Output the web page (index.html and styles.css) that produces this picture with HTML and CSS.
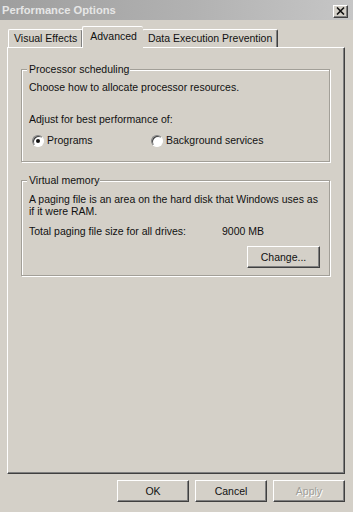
FILE: index.html
```html
<!DOCTYPE html>
<html>
<head>
<meta charset="utf-8">
<link rel="stylesheet" href="styles.css">
</head>
<body>
<div class="window">
  <div class="titlebar">
    <span class="title">Performance Options</span>
    <span class="close">
      <svg width="9" height="8" viewBox="0 0 9 8"><path d="M1 0.5 L8 7.5 M8 0.5 L1 7.5" stroke="#111" stroke-width="1.6"/></svg>
    </span>
  </div>
  <div class="content">
    <div class="tabs">
      <div class="tab">Visual Effects</div>
      <div class="tab active">Advanced</div>
      <div class="tab">Data Execution Prevention</div>
    </div>
    <div class="panel">
      <div class="group proc">
        <span class="legend">Processor scheduling</span>
        <p class="line">Choose how to allocate processor resources.</p>
        <p class="line adjust">Adjust for best performance of:</p>
        <div class="radios">
          <label class="radio-item programs"><span class="radio checked"></span>Programs</label>
          <label class="radio-item"><span class="radio"></span>Background services</label>
        </div>
      </div>
      <div class="group vm">
        <span class="legend">Virtual memory</span>
        <p class="wrap">A paging file is an area on the hard disk that Windows uses as if it were RAM.</p>
        <div class="total"><span class="total-label">Total paging file size for all drives:</span><span>9000 MB</span></div>
        <div class="change-row"><span class="btn">Change...</span></div>
      </div>
    </div>
    <div class="footer">
      <span class="btn">OK</span>
      <span class="btn">Cancel</span>
      <span class="btn disabled">Apply</span>
    </div>
  </div>
</div>
</body>
</html>
```
FILE: styles.css
```css
* { box-sizing: border-box; }
html, body {
  margin: 0;
  padding: 0;
  width: 353px;
  height: 512px;
  background: #d4d0c8;
  overflow: hidden;
}
body {
  font-family: "Liberation Sans", Arial, sans-serif;
  font-size: 10.5px;
  color: #111;
}
.window {
  width: 353px;
  height: 512px;
  display: flex;
  flex-direction: column;
}
.titlebar {
  height: 20px;
  background: linear-gradient(to right, #9e9e9e, #b2b2b2 55%, #c6c6c6);
  display: flex;
  align-items: center;
  justify-content: space-between;
  padding: 0 5px 0 2px;
}
.title {
  color: #e6e6e6;
  font-weight: bold;
  font-size: 11.2px;
}
.close {
  width: 15px;
  height: 13px;
  background: #d4d0c8;
  border: 1px solid;
  border-color: #fff #404040 #404040 #fff;
  box-shadow: inset -1px -1px 0 #808080;
  display: flex;
  align-items: center;
  justify-content: center;
  margin-top: 2px;
}
.content {
  padding: 6px 8px 0 7px;
  display: flex;
  flex-direction: column;
}
.tabs {
  display: flex;
  align-items: flex-end;
  height: 21px;
  position: relative;
  z-index: 1;
  padding-left: 1px;
}
.tab {
  height: 18px;
  line-height: 17px;
  padding: 0 5px;
  border-top: 1px solid #fff;
  border-left: 1px solid #fff;
  border-right: 1px solid #404040;
  box-shadow: inset -1px 0 0 #808080;
  border-radius: 2px 2px 0 0;
  background: #d4d0c8;
}
.tab.active {
  height: 22px;
  line-height: 19px;
  margin: 0 -1px 0 -1px;
  padding: 0 6px 0 7px;
  margin-bottom: -1px;
  border-left: 1px solid #fff;
  z-index: 2;
  border-right: none;
  box-shadow: none;
}
.panel {
  height: 427px;
  border: 1px solid;
  border-color: #fff #404040 #404040 #fff;
  box-shadow: inset -1px -1px 0 #808080;
  padding: 21px 14px 0 13px;
  display: flex;
  flex-direction: column;
  gap: 18px;
}
.group {
  position: relative;
  border: 1px solid #a29f98;
  box-shadow: 1px 1px 0 #fff, inset 1px 1px 0 #fff;
  padding: 11px 8px 0 7px;
}
.legend {
  position: absolute;
  top: -7px;
  left: 5px;
  padding: 0 1px 0 2px;
  background: #d4d0c8;
  line-height: 13px;
}
.line {
  margin: 0;
  line-height: 13px;
}
.proc { height: 93px; }
.adjust { margin-top: 19px; }
.radios {
  display: flex;
  margin-top: 8px;
  padding-left: 3px;
  line-height: 13px;
}
.radio-item {
  display: flex;
  align-items: center;
  gap: 2px;
}
.radio-item.programs { width: 119px; }
.radio {
  width: 12px;
  height: 12px;
  border-radius: 50%;
  border: 1px solid;
  border-color: #808080 #fff #fff #808080;
  box-shadow: inset 1px 1px 0 #404040;
  background: #fff;
  display: flex;
  align-items: center;
  justify-content: center;
  margin-right: 1px;
}
.radio.checked::after {
  content: "";
  width: 4px;
  height: 4px;
  border-radius: 50%;
  background: #111;
}
.vm {
  height: 96px;
  padding-top: 13px;
}
.wrap {
  margin: 0;
  line-height: 11.5px;
  padding-right: 2px;
}
.total {
  margin-top: 8px;
  line-height: 13px;
  display: flex;
}
.total-label { width: 193px; }
.change-row {
  display: flex;
  justify-content: flex-end;
  margin-top: 8px;
}
.btn {
  width: 72px;
  height: 22px;
  display: flex;
  align-items: center;
  justify-content: center;
  border: 1px solid;
  border-color: #fff #404040 #404040 #fff;
  box-shadow: inset -1px -1px 0 #808080;
  background: #d4d0c8;
}
.change-row .btn { width: 73px; margin-right: 1px; }
.footer {
  display: flex;
  justify-content: flex-end;
  gap: 6px;
  margin-top: 6px;
}
.btn.disabled {
  color: #a09e98;
  text-shadow: 1px 1px 0 #fff;
}
```
